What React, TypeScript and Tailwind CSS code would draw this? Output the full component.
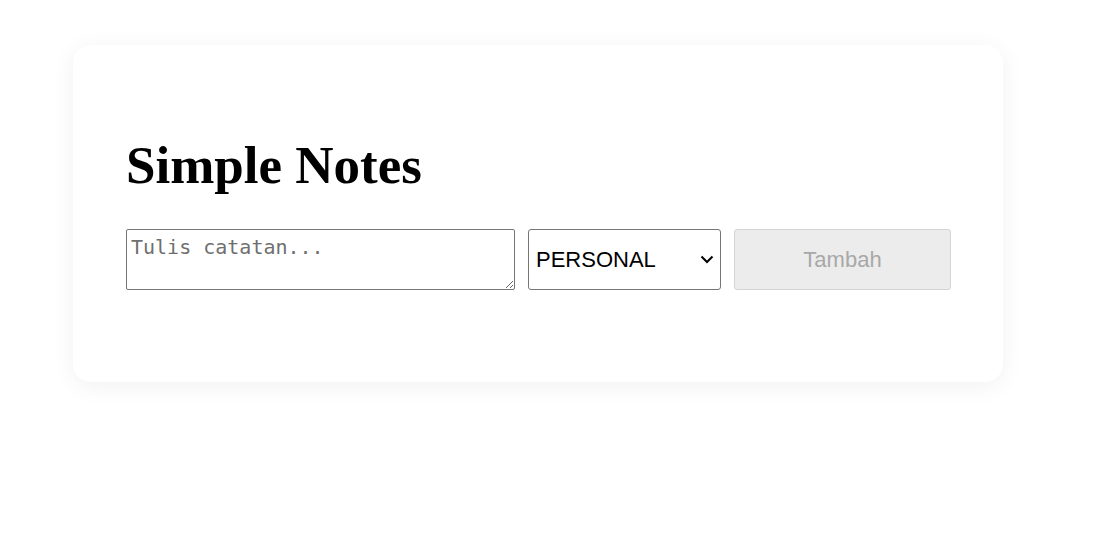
import React from "react";

export default function App() {
  return (
    <div className="min-h-[546px] w-full bg-white pt-[45px] pl-[73px]">
      <div className="w-[930px] rounded-[18px] bg-white pl-[53px] pr-[52px] pt-[90px] pb-[92px] shadow-[0_4px_24px_rgba(0,0,0,0.06)]">
        <h1 className="m-0 text-[53px] leading-[60px] font-bold text-black [font-family:'Liberation_Serif','Times_New_Roman',serif]">
          Simple Notes
        </h1>
        <div className="mt-[34px] flex h-[61px] gap-[13px]">
          <textarea
            placeholder="Tulis catatan..."
            className="h-[61px] w-[389px] rounded-[2px] border border-[#767676] bg-white px-[4px] pt-[5px] pb-[2px] text-[20px] leading-[24px] text-black placeholder:text-[#6f6f6f] [font-family:'DejaVu_Sans_Mono',monospace]"
          />
          <div className="relative h-[61px] w-[193px]">
            <select
              defaultValue="PERSONAL"
              className="h-[61px] w-full appearance-none rounded-[3px] border border-[#767676] bg-white pl-[7px] pr-[30px] text-[22px] text-black [font-family:'Liberation_Sans',Arial,sans-serif]"
            >
              <option value="PERSONAL">PERSONAL</option>
              <option value="WORK">WORK</option>
            </select>
            <svg
              className="pointer-events-none absolute right-[7px] top-[26px]"
              width="14"
              height="9"
              viewBox="0 0 14 9"
              fill="none"
            >
              <path d="M1.5 1.5 L7 7 L12.5 1.5" stroke="#000" strokeWidth="2" />
            </svg>
          </div>
          <button
            disabled
            className="h-[61px] w-[217px] rounded-[3px] border border-[#d4d4d4] bg-[#ececec] text-[22px] text-[#a8a8a8] [font-family:'Liberation_Sans',Arial,sans-serif]"
          >
            Tambah
          </button>
        </div>
      </div>
    </div>
  );
}
